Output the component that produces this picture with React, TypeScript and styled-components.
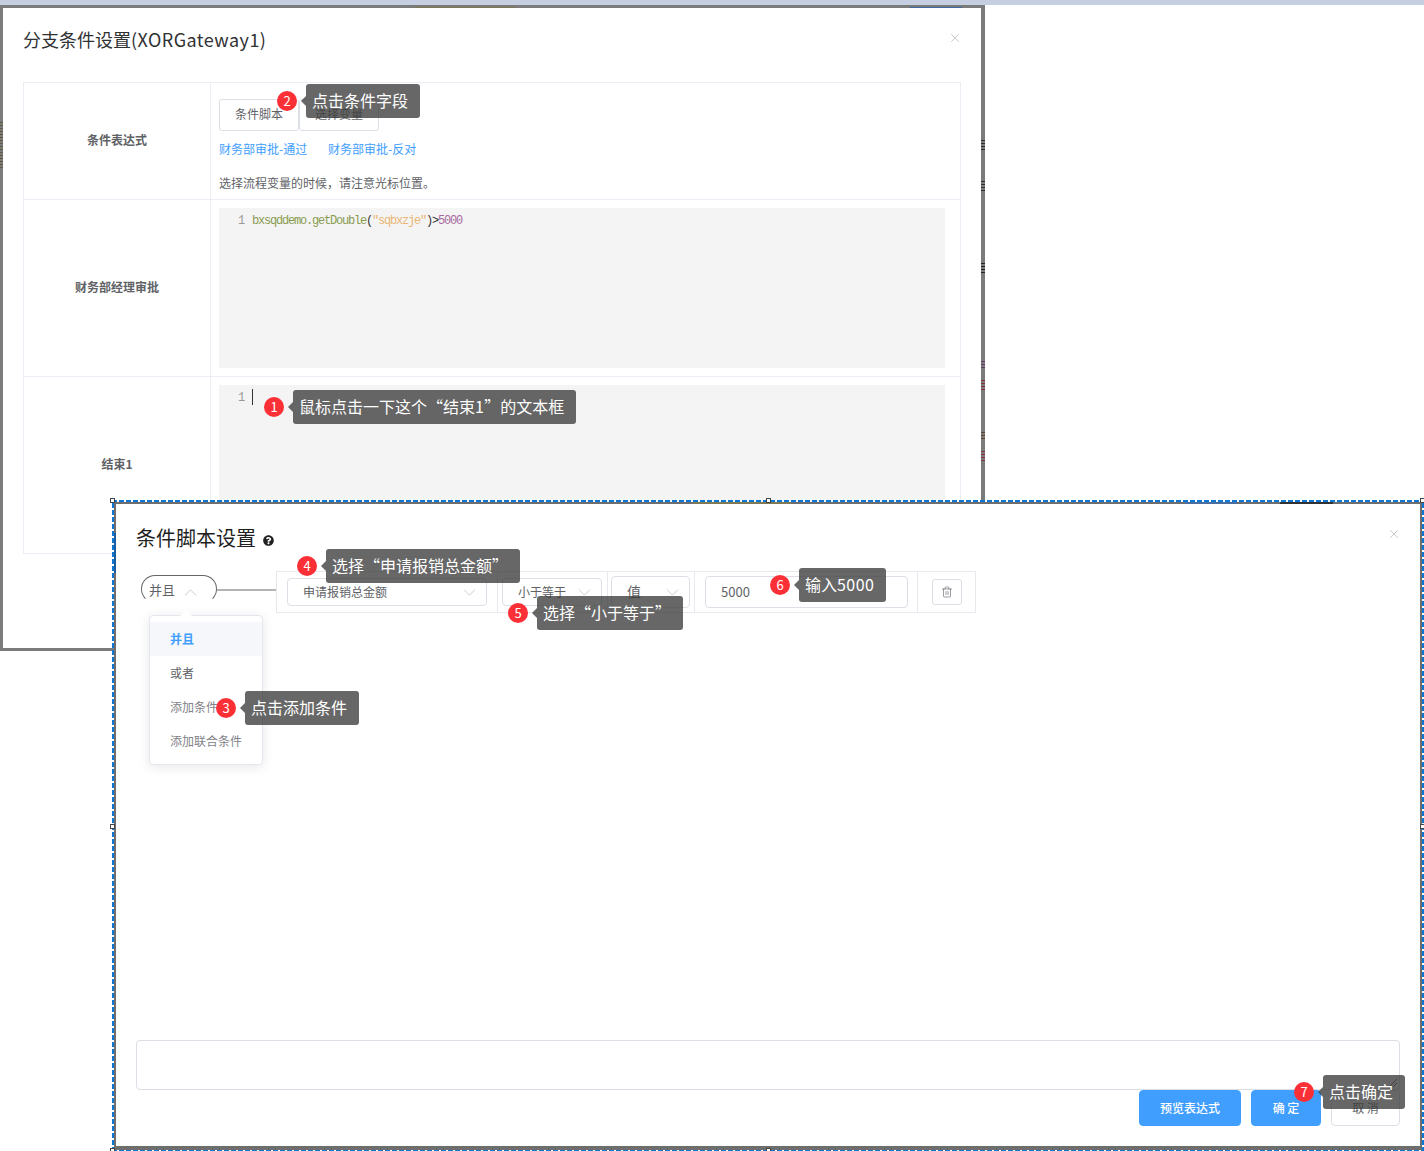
import { ChevronDown, ChevronUp, Trash2, X } from 'lucide-react'
import type { ReactNode } from 'react'
import { FaQuestionCircle } from 'react-icons/fa'
import styled, { createGlobalStyle } from 'styled-components'

const GlobalStyle = createGlobalStyle`
    html, body {
        margin: 0;
        padding: 0;
        background: #fff;
    }
    body {
        font-family: "Noto Sans CJK SC", "Liberation Sans", sans-serif;
        color: #606266;
    }
    * {
        box-sizing: border-box;
    }
`

const Page = styled.div`
    position: relative;
    width: 1424px;
    height: 1151px;
    overflow: hidden;
    background: #fff;
`

const TopBand = styled.div`
    height: 5px;
    background: #c5cfe1;
`

/* windows on the captured desktop */
const BackWindow = styled.div`
    position: absolute;
    left: 0;
    top: 5px;
    width: 985px;
    height: 646px;
    padding: 3px 4px 3px 3px;
    background: #7b7b7b;
`

const BackPanel = styled.div`
    height: 100%;
    padding: 0 20px;
    background: #fff;
    overflow: hidden;
`

const Header = styled.div`
    display: flex;
    justify-content: space-between;
`

const BackHeader = styled(Header)`
    height: 74px;
    padding-top: 19px;
`

const BackTitle = styled.h2`
    margin: 0;
    font-size: 18px;
    font-weight: 400;
    line-height: 24px;
    color: #303133;
`

const Latin = styled.span`
    letter-spacing: 0.45px;
`

const CloseButton = styled.span<{ $top: number }>`
    display: flex;
    height: 12px;
    margin-top: ${(p) => p.$top}px;
    margin-right: -1px;
    color: #a9acb2;
`

const Table = styled.div`
    border: 1px solid #ebeef5;
`

const Row = styled.div<{ $height: number; $last?: boolean }>`
    display: grid;
    grid-template-columns: 187px 1fr;
    height: ${(p) => p.$height}px;
    border-bottom: ${(p) => (p.$last ? 'none' : '1px solid #ebeef5')};
`

const RowLabel = styled.div`
    display: flex;
    align-items: center;
    justify-content: center;
    padding-bottom: 4px;
    border-right: 1px solid #ebeef5;
    font-size: 12px;
    font-weight: 700;
    color: #606266;
`

const RowBody = styled.div`
    padding: 16px 15px 0 8px;
`

const EditorCell = styled.div`
    padding: 8px 15px 8px 8px;
`

const Tabs = styled.div`
    display: flex;
`

const TabButton = styled.button`
    width: 80px;
    height: 32px;
    padding: 0 0 3px;
    background: #fff;
    border: 1px solid #dcdfe6;
    border-radius: 3px;
    font: inherit;
    font-size: 12px;
    color: #606266;
`

const Links = styled.div`
    display: flex;
    gap: 19px;
    margin-top: 9px;
    font-size: 12px;
    line-height: 18px;
    color: #409eff;
`

const LinkText = styled.span`
    width: 90px;
    white-space: nowrap;
`

const Note = styled.div`
    margin-top: 16px;
    font-size: 12px;
    line-height: 18px;
    color: #606266;
`

const Editor = styled.div<{ $height: number }>`
    display: flex;
    height: ${(p) => p.$height}px;
    padding-top: 5px;
    background: #f4f4f4;
    font-family: "Liberation Mono", monospace;
    font-size: 12px;
    line-height: 16px;
    letter-spacing: -1.2px;
`

const Gutter = styled.span`
    width: 25px;
    margin-right: 8px;
    text-align: right;
    color: #999;
`

const Token = styled.span<{ $color: string }>`
    color: ${(p) => p.$color};
`

const Caret = styled.span`
    display: block;
    width: 1px;
    height: 16px;
    margin-top: -1px;
    background: #333;
`

/* front dialog with its selection frame */
const Selection = styled.div`
    position: absolute;
    left: 112px;
    top: 500px;
    width: 1312px;
    height: 652px;
    padding: 2px;
    background-image:
        repeating-linear-gradient(90deg, #0a78d2 0 5px, transparent 5px 7px),
        repeating-linear-gradient(90deg, #0a78d2 0 5px, transparent 5px 7px),
        repeating-linear-gradient(0deg, #0a78d2 0 5px, transparent 5px 7px),
        repeating-linear-gradient(0deg, #0a78d2 0 5px, transparent 5px 7px);
    background-size:
        100% 2px,
        100% 2px,
        2px 100%,
        2px 100%;
    background-position:
        0 0,
        0 100%,
        0 0,
        100% 0;
    background-repeat: no-repeat;
`

const FrontPanel = styled.div`
    position: relative;
    display: flex;
    flex-direction: column;
    height: 100%;
    padding: 20px;
    background: #fff;
    border-style: solid;
    border-color: #6e6e6e;
    border-width: 2px 2px 4px 2px;
`

const FrontHeader = styled(Header)`
    height: 28px;
`

const FrontTitle = styled.h2`
    display: flex;
    align-items: center;
    gap: 7px;
    margin: 0;
    font-size: 20px;
    font-weight: 400;
    line-height: 28px;
    color: #1f1f1f;
`

const HelpIcon = styled(FaQuestionCircle)`
    width: 11px;
    height: 11px;
    margin-top: 4px;
    color: #222;
`

const ConditionLine = styled.div`
    display: flex;
    align-items: flex-start;
    margin-top: 19px;
    margin-left: 5px;
`

const JoinPill = styled.div`
    display: flex;
    align-items: center;
    gap: 5px;
    width: 76px;
    height: 28px;
    margin-top: 4px;
    padding-left: 7px;
    border: 1px solid #666;
    border-bottom-color: transparent;
    border-radius: 14px;
    font-size: 13px;
    color: #606266;
`

const PillArrow = styled(ChevronUp)`
    margin-top: 7px;
    color: #c0c4cc;
`

const Connector = styled.div`
    width: 59px;
    height: 2px;
    margin-top: 18px;
    background: #b4b4b4;
`

const ConditionBox = styled.div`
    display: flex;
    width: 700px;
    height: 42px;
    border: 1px solid #e8e8ee;
`

const Cell = styled.div<{ $width: number; $pad: number; $last?: boolean }>`
    display: flex;
    align-items: center;
    width: ${(p) => p.$width}px;
    padding-left: ${(p) => p.$pad}px;
    border-right: ${(p) => (p.$last ? 'none' : '1px solid #e8e8ee')};
`

const Field = styled.div<{ $width: number; $height: number; $size?: number }>`
    display: flex;
    align-items: center;
    justify-content: space-between;
    width: ${(p) => p.$width}px;
    height: ${(p) => p.$height}px;
    padding: 0 6px 2px 15px;
    border: 1px solid #dcdfe6;
    border-radius: 4px;
    font-size: ${(p) => p.$size ?? 12}px;
    color: #606266;
`

const FieldArrow = styled(ChevronDown)`
    margin-top: 2px;
    color: #c0c4cc;
`

const IconButton = styled.button`
    display: flex;
    align-items: center;
    justify-content: center;
    width: 30px;
    height: 26px;
    padding: 0;
    background: #fff;
    border: 1px solid #dcdfe6;
    border-radius: 3px;
    color: #606266;
`

const Menu = styled.ul`
    position: absolute;
    left: 33px;
    top: 111px;
    width: 114px;
    height: 150px;
    margin: 0;
    padding: 6px 0;
    list-style: none;
    background: #fff;
    border: 1px solid #e4e7ed;
    border-radius: 4px;
    box-shadow: 0 2px 12px rgba(0, 0, 0, 0.1);

    &::before {
        content: '';
        position: absolute;
        left: 30px;
        top: -6px;
        border-style: solid;
        border-width: 0 6px 6px;
        border-color: transparent transparent #fff;
    }
`

const MenuItem = styled.li<{ $active?: boolean; $muted?: boolean }>`
    height: 34px;
    padding-left: 20px;
    font-size: 12px;
    font-weight: ${(p) => (p.$active ? 700 : 400)};
    line-height: 34px;
    color: ${(p) => (p.$active ? '#409eff' : p.$muted ? '#7f8288' : '#606266')};
    background: ${(p) => (p.$active ? '#f5f7fa' : 'transparent')};
`

const Expression = styled.div`
    position: relative;
    height: 50px;
    margin-top: auto;
    border: 1px solid #dcdfe6;
    border-radius: 4px;
`

const ResizeMark = styled.svg`
    position: absolute;
    right: 1px;
    bottom: 1px;
`

const Footer = styled.div`
    display: flex;
    justify-content: flex-end;
    gap: 10px;
`

const ActionButton = styled.button<{ $width: number; $primary?: boolean }>`
    width: ${(p) => p.$width}px;
    height: 36px;
    padding: 0 0 2px;
    background: ${(p) => (p.$primary ? '#409eff' : '#fff')};
    border: 1px solid ${(p) => (p.$primary ? '#409eff' : '#dcdfe6')};
    border-radius: 4px;
    font: inherit;
    font-size: 12px;
    font-weight: ${(p) => (p.$primary ? 500 : 400)};
    color: ${(p) => (p.$primary ? '#fff' : '#606266')};
`

const Handle = styled.span<{ $x: number; $y: number }>`
    position: absolute;
    left: ${(p) => p.$x}px;
    top: ${(p) => p.$y}px;
    width: 5px;
    height: 5px;
    background: #fff;
    border: 1px solid #444;
`

/* bits of the page behind the windows that still show at their edges */
const Scrap = styled.span<{ $x: number; $y: number; $w: number; $h: number; $color: string; $solid?: boolean }>`
    position: absolute;
    left: ${(p) => p.$x}px;
    top: ${(p) => p.$y}px;
    width: ${(p) => p.$w}px;
    height: ${(p) => p.$h}px;
    background: ${(p) =>
        p.$solid
            ? p.$color
            : `repeating-linear-gradient(0deg, ${p.$color} 0 1px, transparent 1px 3px)`};
`

/* numbered tutorial callouts drawn over the screenshot */
const Callout = styled.div<{ $x: number; $y: number }>`
    position: absolute;
    left: ${(p) => p.$x}px;
    top: ${(p) => p.$y}px;
    display: flex;
    align-items: center;
    gap: 9px;
`

const Badge = styled.span`
    display: flex;
    align-items: center;
    justify-content: center;
    width: 20px;
    height: 20px;
    padding-bottom: 2px;
    border-radius: 50%;
    background: #fb2f36;
    font-size: 13px;
    color: #fff;
`

const Bubble = styled.div`
    position: relative;
    height: 34px;
    padding: 0 12px 0 6px;
    border-radius: 3px;
    background: rgba(60, 60, 60, 0.78);
    font-size: 16px;
    line-height: 32px;
    white-space: nowrap;
    color: #fff;

    &::before {
        content: '';
        position: absolute;
        left: -5px;
        top: 12px;
        border-style: solid;
        border-width: 5px 5px 5px 0;
        border-color: transparent rgba(60, 60, 60, 0.78) transparent transparent;
    }
`

const scraps = [
    { x: 415, y: 5, w: 100, h: 3, color: '#7d7850' },
    { x: 910, y: 5, w: 52, h: 3, color: '#3f6aa0' },
    { x: 0, y: 122, w: 3, h: 46, color: '#5e5a3c' },
    { x: 981, y: 139, w: 4, h: 11, color: '#2f2f2f' },
    { x: 981, y: 180, w: 4, h: 11, color: '#2f2f2f' },
    { x: 981, y: 262, w: 4, h: 11, color: '#222' },
    { x: 981, y: 359, w: 4, h: 9, color: '#5f3f63' },
    { x: 981, y: 379, w: 4, h: 11, color: '#8e2f3c' },
    { x: 981, y: 430, w: 4, h: 9, color: '#5c4630' },
    { x: 981, y: 450, w: 4, h: 11, color: '#8e2f3c' },
]

const topScraps = [
    { x: 693, y: 502, w: 98, h: 2, color: '#7f7a55' },
    { x: 1185, y: 502, w: 52, h: 2, color: '#4a6f9e' },
    { x: 1280, y: 502, w: 53, h: 2, color: '#333' },
    { x: 114, y: 533, w: 2, h: 40, color: '#1b5c9f' },
]

const handles = [
    { x: 110, y: 498 },
    { x: 766, y: 498 },
    { x: 1420, y: 498 },
    { x: 110, y: 824 },
    { x: 1420, y: 824 },
    { x: 110, y: 1148 },
    { x: 766, y: 1148 },
]

const callouts: { n: number; x: number; y: number; text: ReactNode }[] = [
    {
        n: 1,
        x: 264,
        y: 390,
        text: (
            <>
                鼠标点击一下这个“结束<Latin>1</Latin>”的文本框
            </>
        ),
    },
    { n: 2, x: 277, y: 84, text: '点击条件字段' },
    { n: 3, x: 216, y: 691, text: '点击添加条件' },
    { n: 4, x: 297, y: 549, text: '选择“申请报销总金额”' },
    { n: 5, x: 508, y: 596, text: '选择“小于等于”' },
    {
        n: 6,
        x: 770,
        y: 568,
        text: (
            <>
                输入<Latin>5000</Latin>
            </>
        ),
    },
    { n: 7, x: 1294, y: 1075, text: '点击确定' },
]

const App = () => {
    return (
        <Page>
            <GlobalStyle />
            <TopBand />

            <BackWindow>
                <BackPanel>
                    <BackHeader>
                        <BackTitle>
                            分支条件设置<Latin>(XORGateway1)</Latin>
                        </BackTitle>
                        <CloseButton $top={4}>
                            <X size={14} strokeWidth={1.1} />
                        </CloseButton>
                    </BackHeader>
                    <Table>
                        <Row $height={117}>
                            <RowLabel>条件表达式</RowLabel>
                            <RowBody>
                                <Tabs>
                                    <TabButton>条件脚本</TabButton>
                                    <TabButton>选择变量</TabButton>
                                </Tabs>
                                <Links>
                                    <LinkText>财务部审批-通过</LinkText>
                                    <LinkText>财务部审批-反对</LinkText>
                                </Links>
                                <Note>选择流程变量的时候，请注意光标位置。</Note>
                            </RowBody>
                        </Row>
                        <Row $height={177}>
                            <RowLabel>财务部经理审批</RowLabel>
                            <EditorCell>
                                <Editor $height={160}>
                                    <Gutter>1</Gutter>
                                    <span>
                                        <Token $color="#8a9c50">bxsqddemo.getDouble</Token>
                                        <Token $color="#333">(</Token>
                                        <Token $color="#eab676">"sqbxzje"</Token>
                                        <Token $color="#333">)&gt;</Token>
                                        <Token $color="#a8699e">5000</Token>
                                    </span>
                                </Editor>
                            </EditorCell>
                        </Row>
                        <Row $height={176} $last>
                            <RowLabel>结束1</RowLabel>
                            <EditorCell>
                                <Editor $height={160}>
                                    <Gutter>1</Gutter>
                                    <Caret />
                                </Editor>
                            </EditorCell>
                        </Row>
                    </Table>
                </BackPanel>
            </BackWindow>

            {scraps.map((s) => (
                <Scrap key={`${s.x}-${s.y}`} $x={s.x} $y={s.y} $w={s.w} $h={s.h} $color={s.color} />
            ))}

            <Selection>
                <FrontPanel>
                    <FrontHeader>
                        <FrontTitle>
                            条件脚本设置
                            <HelpIcon />
                        </FrontTitle>
                        <CloseButton $top={3}>
                            <X size={14} strokeWidth={1.1} />
                        </CloseButton>
                    </FrontHeader>

                    <ConditionLine>
                        <JoinPill>
                            并且
                            <PillArrow size={21} strokeWidth={1} />
                        </JoinPill>
                        <Connector />
                        <ConditionBox>
                            <Cell $width={221} $pad={10}>
                                <Field $width={200} $height={28}>
                                    申请报销总金额
                                    <FieldArrow size={21} strokeWidth={1} />
                                </Field>
                            </Cell>
                            <Cell $width={110} $pad={4}>
                                <Field $width={100} $height={28}>
                                    小于等于
                                    <FieldArrow size={21} strokeWidth={1} />
                                </Field>
                            </Cell>
                            <Cell $width={87} $pad={3}>
                                <Field $width={79} $height={32} $size={14}>
                                    值
                                    <FieldArrow size={21} strokeWidth={1} />
                                </Field>
                            </Cell>
                            <Cell $width={223} $pad={10}>
                                <Field $width={203} $height={32} $size={13}>
                                    5000
                                </Field>
                            </Cell>
                            <Cell $width={57} $pad={14} $last>
                                <IconButton>
                                    <Trash2 size={12} strokeWidth={1.25} />
                                </IconButton>
                            </Cell>
                        </ConditionBox>
                    </ConditionLine>

                    <Menu>
                        <MenuItem $active>并且</MenuItem>
                        <MenuItem>或者</MenuItem>
                        <MenuItem $muted>添加条件</MenuItem>
                        <MenuItem $muted>添加联合条件</MenuItem>
                    </Menu>

                    <Expression>
                        <ResizeMark width="10" height="10" viewBox="0 0 10 10">
                            <path d="M1 9 9 1M5 9 9 5" stroke="#555" strokeWidth="1" fill="none" />
                        </ResizeMark>
                    </Expression>

                    <Footer>
                        <ActionButton $width={102} $primary>
                            预览表达式
                        </ActionButton>
                        <ActionButton $width={70} $primary>
                            确 定
                        </ActionButton>
                        <ActionButton $width={69}>取 消</ActionButton>
                    </Footer>
                </FrontPanel>
            </Selection>

            {topScraps.map((s) => (
                <Scrap key={`${s.x}-${s.y}`} $x={s.x} $y={s.y} $w={s.w} $h={s.h} $color={s.color} $solid />
            ))}

            {handles.map((h) => (
                <Handle key={`${h.x}-${h.y}`} $x={h.x} $y={h.y} />
            ))}

            {callouts.map((c) => (
                <Callout key={c.n} $x={c.x} $y={c.y}>
                    <Badge>{c.n}</Badge>
                    <Bubble>{c.text}</Bubble>
                </Callout>
            ))}
        </Page>
    )
}

export default App
